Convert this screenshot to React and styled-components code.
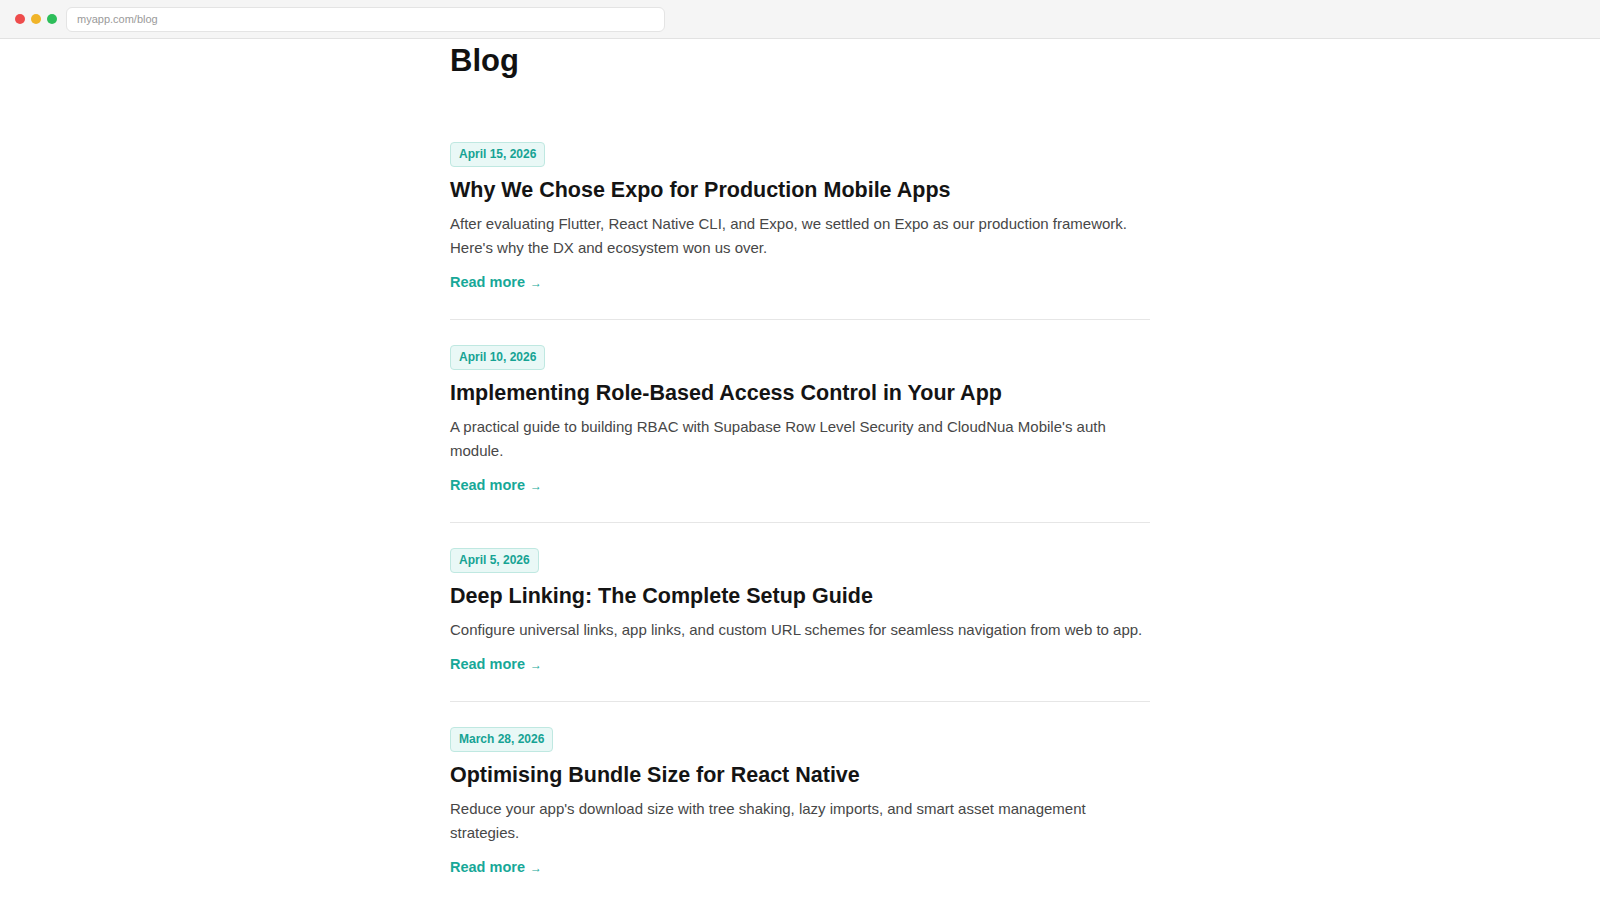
import React from "react";
import styled, { createGlobalStyle } from "styled-components";

const GlobalStyle = createGlobalStyle`
  html, body {
    margin: 0;
    padding: 0;
    background: #ffffff;
    font-family: "Liberation Sans", Arial, sans-serif;
  }
`;

const Window = styled.div`
  width: 1600px;
  height: 900px;
  overflow: hidden;
  display: flex;
  flex-direction: column;
`;

const ChromeBar = styled.div`
  height: 39px;
  flex-shrink: 0;
  display: flex;
  align-items: center;
  padding-left: 15px;
  gap: 6px;
  background: #f5f5f5;
  border-bottom: 1px solid #e2e2e2;
  box-sizing: border-box;
`;

const Dot = styled.span`
  width: 10px;
  height: 10px;
  border-radius: 50%;
  background: ${props => props.color};
`;

const UrlBar = styled.div`
  margin-left: 3px;
  width: 599px;
  height: 25px;
  box-sizing: border-box;
  background: #ffffff;
  border: 1px solid #e4e4e4;
  border-radius: 6px;
  display: flex;
  align-items: center;
  padding-left: 10px;
  font-size: 11px;
  color: #9a9a9a;
`;

const Page = styled.main`
  flex: 1;
  display: flex;
  justify-content: center;
`;

const Column = styled.div`
  width: 700px;
`;

const PageTitle = styled.h1`
  margin: 2px 0 36px;
  font-size: 31px;
  line-height: 40px;
  font-weight: 700;
  color: #111111;
`;

const Post = styled.article`
  padding: 25px 0 25px;
  border-bottom: ${props => (props.last ? "none" : "1px solid #e6e6e6")};
`;

const DateBadge = styled.span`
  display: inline-block;
  padding: 4px 8px;
  font-size: 12px;
  line-height: 15px;
  font-weight: 700;
  color: #16a394;
  background: #e9f8f6;
  border: 1px solid #bfe8e1;
  border-radius: 4px;
`;

const PostTitle = styled.h2`
  margin: 9px 0 8px;
  font-size: 21.5px;
  line-height: 28px;
  font-weight: 700;
  color: #141414;
`;

const Excerpt = styled.p`
  margin: 0;
  font-size: 15px;
  line-height: 24px;
  color: #474747;
`;

const ReadMore = styled.a`
  display: inline-block;
  margin-top: 11px;
  font-size: 14.5px;
  line-height: 22px;
  font-weight: 700;
  color: #17a898;
  text-decoration: none;

  span {
    font-size: 12px;
    margin-left: 5px;
  }
`;

const posts = [
  {
    date: "April 15, 2026",
    title: "Why We Chose Expo for Production Mobile Apps",
    excerpt:
      "After evaluating Flutter, React Native CLI, and Expo, we settled on Expo as our production framework. Here's why the DX and ecosystem won us over."
  },
  {
    date: "April 10, 2026",
    title: "Implementing Role-Based Access Control in Your App",
    excerpt:
      "A practical guide to building RBAC with Supabase Row Level Security and CloudNua Mobile's auth module."
  },
  {
    date: "April 5, 2026",
    title: "Deep Linking: The Complete Setup Guide",
    excerpt:
      "Configure universal links, app links, and custom URL schemes for seamless navigation from web to app."
  },
  {
    date: "March 28, 2026",
    title: "Optimising Bundle Size for React Native",
    excerpt:
      "Reduce your app's download size with tree shaking, lazy imports, and smart asset management strategies."
  }
];

const App = () => (
  <>
    <GlobalStyle />
    <Window>
      <ChromeBar>
        <Dot color="#ee4c4c" />
        <Dot color="#f0b429" />
        <Dot color="#2dbe5a" />
        <UrlBar>myapp.com/blog</UrlBar>
      </ChromeBar>
      <Page>
        <Column>
          <PageTitle>Blog</PageTitle>
          {posts.map((post, i) => (
            <Post key={post.title} last={i === posts.length - 1}>
              <DateBadge>{post.date}</DateBadge>
              <PostTitle>{post.title}</PostTitle>
              <Excerpt>{post.excerpt}</Excerpt>
              <ReadMore href="#">
                Read more<span>→</span>
              </ReadMore>
            </Post>
          ))}
        </Column>
      </Page>
    </Window>
  </>
);

export default App;
